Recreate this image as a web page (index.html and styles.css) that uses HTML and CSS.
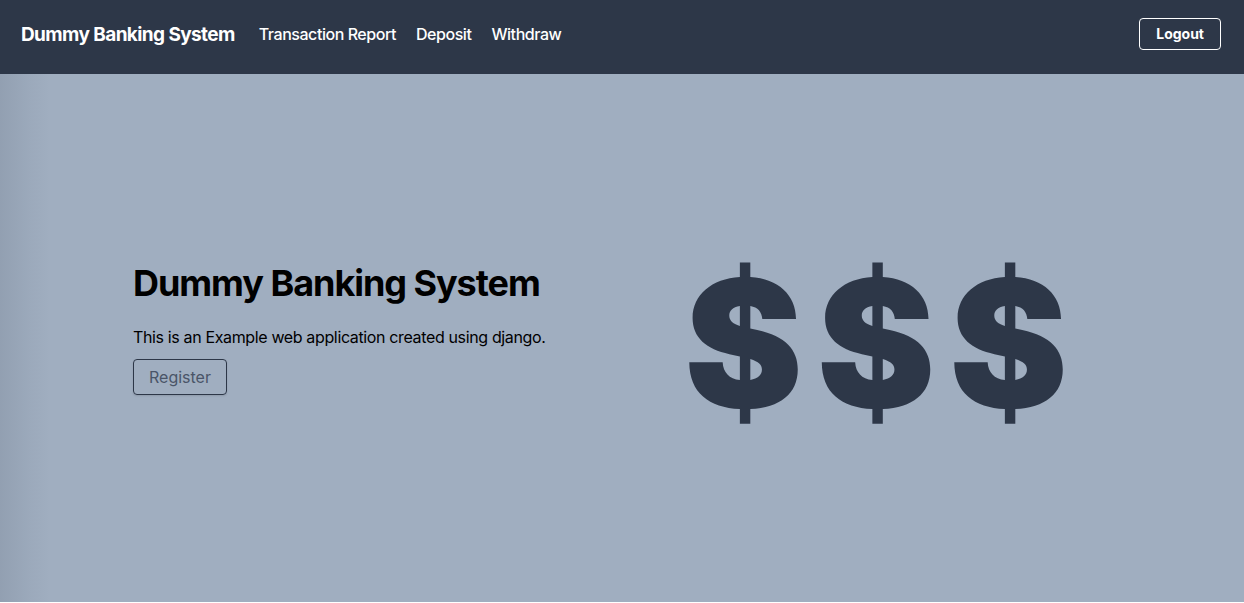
FILE: index.html
```html
<!DOCTYPE html>
<html>
<head>
<meta charset="utf-8">
<link rel="stylesheet" href="styles.css">
</head>
<body>
<nav class="navbar">
  <div class="nav-left">
    <a class="brand" href="#">Dummy Banking System</a>
    <a class="nav-link" href="#">Transaction Report</a>
    <a class="nav-link" href="#">Deposit</a>
    <a class="nav-link" href="#">Withdraw</a>
  </div>
  <a class="logout" href="#">Logout</a>
</nav>
<main class="hero">
  <div class="hero-inner">
    <div class="hero-text">
      <h1 class="hero-title">Dummy Banking System</h1>
      <p class="hero-desc">This is an Example web application created using django.</p>
      <a class="register" href="#">Register</a>
    </div>
    <div class="hero-art">$$$</div>
  </div>
</main>
</body>
</html>
```
FILE: styles.css
```css
* { box-sizing: border-box; }
html, body { margin: 0; padding: 0; }
body {
  font-family: Inter, "Noto Sans", sans-serif;
  background: #ffffff;
  color: #000;
}
a { text-decoration: none; }
.navbar {
  height: 74px;
  background: #2d3748;
  display: flex;
  align-items: center;
  justify-content: space-between;
  padding: 0 23px 6px 21px;
}
.nav-left {
  display: flex;
  align-items: center;
}
.brand {
  color: #fff;
  font-weight: 700;
  font-size: 19px;
  letter-spacing: -0.6px;
  margin-right: 24px;
}
.nav-link {
  color: #fff;
  font-size: 16px;
  font-weight: 500;
  letter-spacing: -0.45px;
  margin-right: 20px;
}
.logout {
  color: #fff;
  font-size: 14px;
  font-weight: 700;
  border: 1px solid #fff;
  border-radius: 4px;
  padding: 7px 16px;
  line-height: 16px;
}
.hero {
  height: 528px;
  background: #a0aec0;
  background-image: linear-gradient(to right, rgba(45,55,72,0.12) 0, rgba(45,55,72,0.04) 30px, rgba(45,55,72,0) 50px);
  display: flex;
  align-items: center;
}
.hero-inner {
  width: 100%;
  display: grid;
  grid-template-columns: 489px 1fr;
  padding-left: 133px;
  padding-right: 110px;
  align-items: center;
}
.hero-text {
  margin-bottom: 19px;
}
.hero-title {
  margin: 0;
  font-size: 36px;
  font-weight: 700;
  line-height: 40px;
  letter-spacing: -1.05px;
}
.hero-desc {
  margin: 22px 0 0;
  font-size: 16px;
  line-height: 24px;
  letter-spacing: -0.36px;
}
.register {
  display: inline-block;
  margin-top: 10px;
  color: #4a5568;
  font-size: 16px;
  line-height: 24px;
  padding: 5px 15px;
  border: 1px solid #2d3748;
  border-radius: 4px;
  box-shadow: 0 1px 2px rgba(0,0,0,0.12);
}
.hero-art {
  text-align: center;
  color: #2d3748;
  font-size: 178px;
  font-weight: 900;
  line-height: 1;
  letter-spacing: 14px;
  padding-left: 10px;
  padding-top: 11px;
}
```
